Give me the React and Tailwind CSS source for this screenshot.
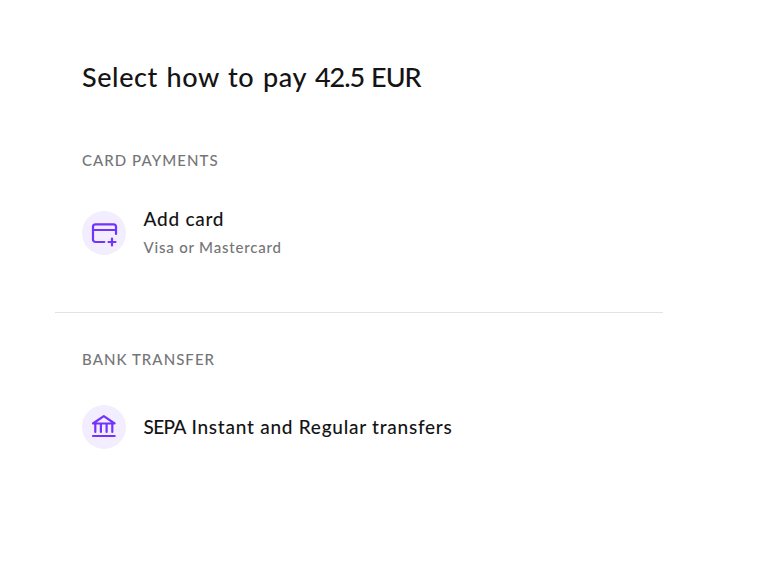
function CardPlusIcon() {
  return (
    <svg viewBox="0 0 44 44" className="size-11" fill="none" stroke="#7233ff" strokeWidth="2.2" strokeLinecap="round" strokeLinejoin="round">
      <path d="M22.3 31H13.500a2.500 2.500 0 0 1-2.500-2.500V15.800a2.500 2.500 0 0 1 2.500-2.500h18a2.500 2.500 0 0 1 2.500 2.500V23" />
      <path d="M11 19h23" />
      <path d="M30 27.500v7M26.500 31h7" />
    </svg>
  );
}

function BankIcon() {
  return (
    <svg viewBox="0 0 44 44" className="size-11" fill="none" stroke="#7233ff" strokeWidth="2.2" strokeLinecap="round" strokeLinejoin="round">
      <path d="M11 18.500 21.800 11.200 32.600 18.500z" />
      <path d="M13.300 19v8M18.900 19v8M24.600 19v8M30.300 19v8" />
      <path d="M11 31h21.700" />
    </svg>
  );
}

function SectionLabel({ children }) {
  return <h2 className="text-[15px] leading-5 font-medium tracking-[1.05px] text-[#757577] uppercase">{children}</h2>;
}

function PaymentOption({ icon, title, subtitle }) {
  return (
    <button className="flex w-full items-center gap-[17.5px] text-left">
      <span className="size-11 shrink-0 rounded-full bg-[#f2eeff]">{icon}</span>
      <span>
        <span className="block text-[19px] leading-7 font-medium tracking-[0.75px] text-[#141415]">{title}</span>
        {subtitle && <span className="block text-[15px] leading-7 font-medium tracking-[0.8px] text-[#757577]">{subtitle}</span>}
      </span>
    </button>
  );
}

export default function App() {
  return (
    <main className="min-h-screen bg-white pt-[59px] pl-[55px] font-['Lato',sans-serif]">
      <div className="w-[608px]">
        <h1 className="px-[27px] text-[27px] leading-9 font-medium tracking-[0.6px] text-[#141415] [word-spacing:1.2px]">
          Select how to pay <span className="tracking-[-1.05px]">42.5 EUR</span>
        </h1>
        <section className="border-b border-[#e3e3e4] px-[27px] pt-[55px] pb-[51px]">
          <SectionLabel>Card payments</SectionLabel>
          <div className="mt-[35px]">
            <PaymentOption icon={<CardPlusIcon />} title="Add card" subtitle="Visa or Mastercard" />
          </div>
        </section>
        <section className="px-[27px] pt-[36px]">
          <SectionLabel>Bank transfer</SectionLabel>
          <div className="mt-[36px]">
            <PaymentOption
              icon={<BankIcon />}
              title={<><span className="tracking-[-0.6px]">SEPA</span> Instant and Regular transfers</>}
            />
          </div>
        </section>
      </div>
    </main>
  );
}
